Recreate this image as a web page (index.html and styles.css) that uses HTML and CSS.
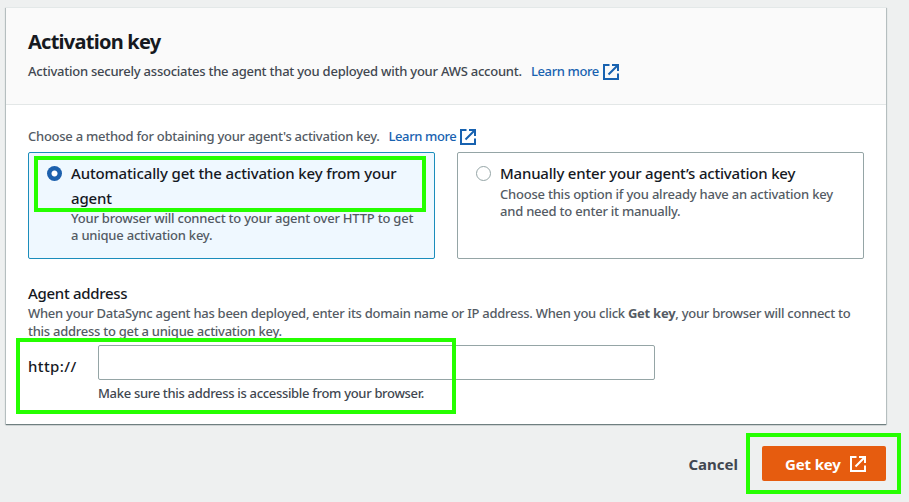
FILE: index.html
```html
<!DOCTYPE html>
<html lang="en">
<head>
<meta charset="utf-8">
<title>Activation key</title>
<link rel="stylesheet" href="styles.css">
</head>
<body>
<svg class="sprite" aria-hidden="true">
  <symbol id="external" viewBox="0 0 16 16">
    <path d="M6.5 1H1v14h14V9.5M9 1h6v6M14.5 1.5L5.5 10.5" fill="none" stroke="currentColor" stroke-width="2"/>
  </symbol>
</svg>
<main class="page">
  <section class="panel">
    <header class="panel-header">
      <h1 class="title">Activation key</h1>
      <p class="line intro"><span class="intro-text">Activation securely associates the agent that you deployed with your AWS account.</span><a class="link">Learn more<svg class="icon"><use href="#external"/></svg></a></p>
    </header>
    <div class="panel-body">
      <p class="line choose"><span class="choose-text">Choose a method for obtaining your agent's activation key.</span><a class="link">Learn more<svg class="icon"><use href="#external"/></svg></a></p>
      <div class="tiles">
        <div class="tile selected">
          <span class="radio"></span>
          <div>
            <div class="label auto">Automatically get the activation key from your<br>agent</div>
            <div class="hint">Your browser will connect to your agent over HTTP to get<br>a unique activation key.</div>
          </div>
          <div class="mark mark-tile"></div>
        </div>
        <div class="tile">
          <span class="radio"></span>
          <div>
            <div class="label manual">Manually enter your agent’s activation key</div>
            <div class="hint">Choose this option if you already have an activation key<br>and need to enter it manually.</div>
          </div>
        </div>
      </div>
      <div class="label address">Agent address</div>
      <p class="address-hint">When your DataSync agent has been deployed, enter its domain name or IP address. When you click <b>Get key</b>, your browser will connect to<br>this address to get a unique activation key.</p>
      <div class="field">
        <span class="label prefix">http://</span>
        <div class="control">
          <input class="input" type="text" aria-label="Agent address">
          <div class="constraint">Make sure this address is accessible from your browser.</div>
        </div>
        <div class="mark mark-field"></div>
      </div>
    </div>
  </section>
  <footer class="actions">
    <button class="cancel">Cancel</button>
    <div class="primary-wrap">
      <button class="primary"><span>Get key</span><svg class="icon"><use href="#external"/></svg></button>
      <div class="mark mark-button"></div>
    </div>
  </footer>
</main>
</body>
</html>
```
FILE: styles.css
```css
* { box-sizing: border-box; }
body {
  margin: 0;
  height: 502px;
  overflow: hidden;
  background: #eef0f0;
  color: #16191f;
  font: 500 13px/18px "Noto Sans", sans-serif;
  white-space: nowrap;
}
h1, p { margin: 0; }
button { border: 0; padding: 0; font-family: inherit; }
.sprite { position: absolute; width: 0; height: 0; }
.page { padding: 7px 23px 0 6px; }
.panel {
  height: 417px;
  background: #fff;
  border-top: 1px solid #e3e8e8;
  box-shadow: 0 1px 1px 0 #6f7f80, 1px 1px 1px 0 #c3cccc, -1px 1px 1px 0 #c3cccc;
}
.panel-header {
  height: 97px;
  padding: 22px 22px 0;
  background: #fafafa;
  border-bottom: 1px solid #e3e7e7;
}
.title { font-size: 20px; line-height: 24px; font-weight: 700; letter-spacing: -0.75px; }
.line { display: flex; align-items: center; color: #414750; }
.intro { margin-top: 8px; }
.intro-text { width: 503px; letter-spacing: -0.24px; }
.choose { color: #545b64; }
.choose-text { width: 360.5px; letter-spacing: -0.26px; }
.link { display: flex; align-items: center; color: #1862b0; letter-spacing: -0.4px; }
.icon { width: 16px; height: 16px; display: block; flex: none; }
.link .icon { margin: 2px 0 0 4px; }
.panel-body { padding: 22px 22px 0; }
.tiles { display: grid; grid-template-columns: 1fr 1fr; gap: 22px; margin-top: 7px; }
.tile {
  position: relative;
  display: flex;
  height: 107px;
  padding: 8px 18px;
  border: 1px solid #95a5a6;
  border-radius: 2px;
}
.tile.selected { background: #eff8ff; border-color: #1b8dbb; }
.radio {
  width: 15px;
  height: 15px;
  margin: 5px 9px 0 0;
  flex: none;
  border: 1px solid #95a5a6;
  border-radius: 50%;
  background: #fff;
}
.selected .radio { border: 0; background: radial-gradient(circle, #fff 2.6px, #1c60ad 3.4px); }
.label { font-size: 15px; line-height: 25px; font-weight: 500; letter-spacing: -0.2px; }
.label.auto { margin-bottom: -1px; letter-spacing: -0.15px; }
.hint { color: #545b64; line-height: 17px; letter-spacing: -0.22px; }
.address { margin-top: 22px; letter-spacing: -0.3px; }
.address-hint { margin-top: -2px; color: #545b64; letter-spacing: -0.263px; }
.field { position: relative; display: flex; margin-top: 5px; }
.label.prefix { width: 70px; padding-top: 9px; letter-spacing: 0.4px; }
.input {
  display: block;
  width: 557px;
  height: 35px;
  border: 1px solid #95a5a6;
  border-radius: 2px;
  background: #fff;
  outline: 0;
}
.constraint { margin-top: 4px; color: #414750; letter-spacing: -0.32px; }
.actions { display: flex; justify-content: flex-end; align-items: center; gap: 24px; margin-top: 22px; }
.cancel { background: none; color: #414750; font-size: 15px; font-weight: 700; }
.primary-wrap { position: relative; }
.primary {
  display: flex;
  align-items: center;
  gap: 9px;
  width: 124px;
  height: 35px;
  padding-left: 23px;
  border-radius: 2px;
  background: #e65c0f;
  color: #fff;
  font-size: 15px;
  font-weight: 700;
  letter-spacing: -0.15px;
}
.mark { position: absolute; border: 4px solid #25ff00; pointer-events: none; }
.mark-tile { left: 5px; top: 3px; width: 392px; height: 56px; }
.mark-field { left: -12px; top: -7px; width: 440px; height: 76px; }
.mark-button { left: -16px; top: -13px; width: 155px; height: 61px; }
```
